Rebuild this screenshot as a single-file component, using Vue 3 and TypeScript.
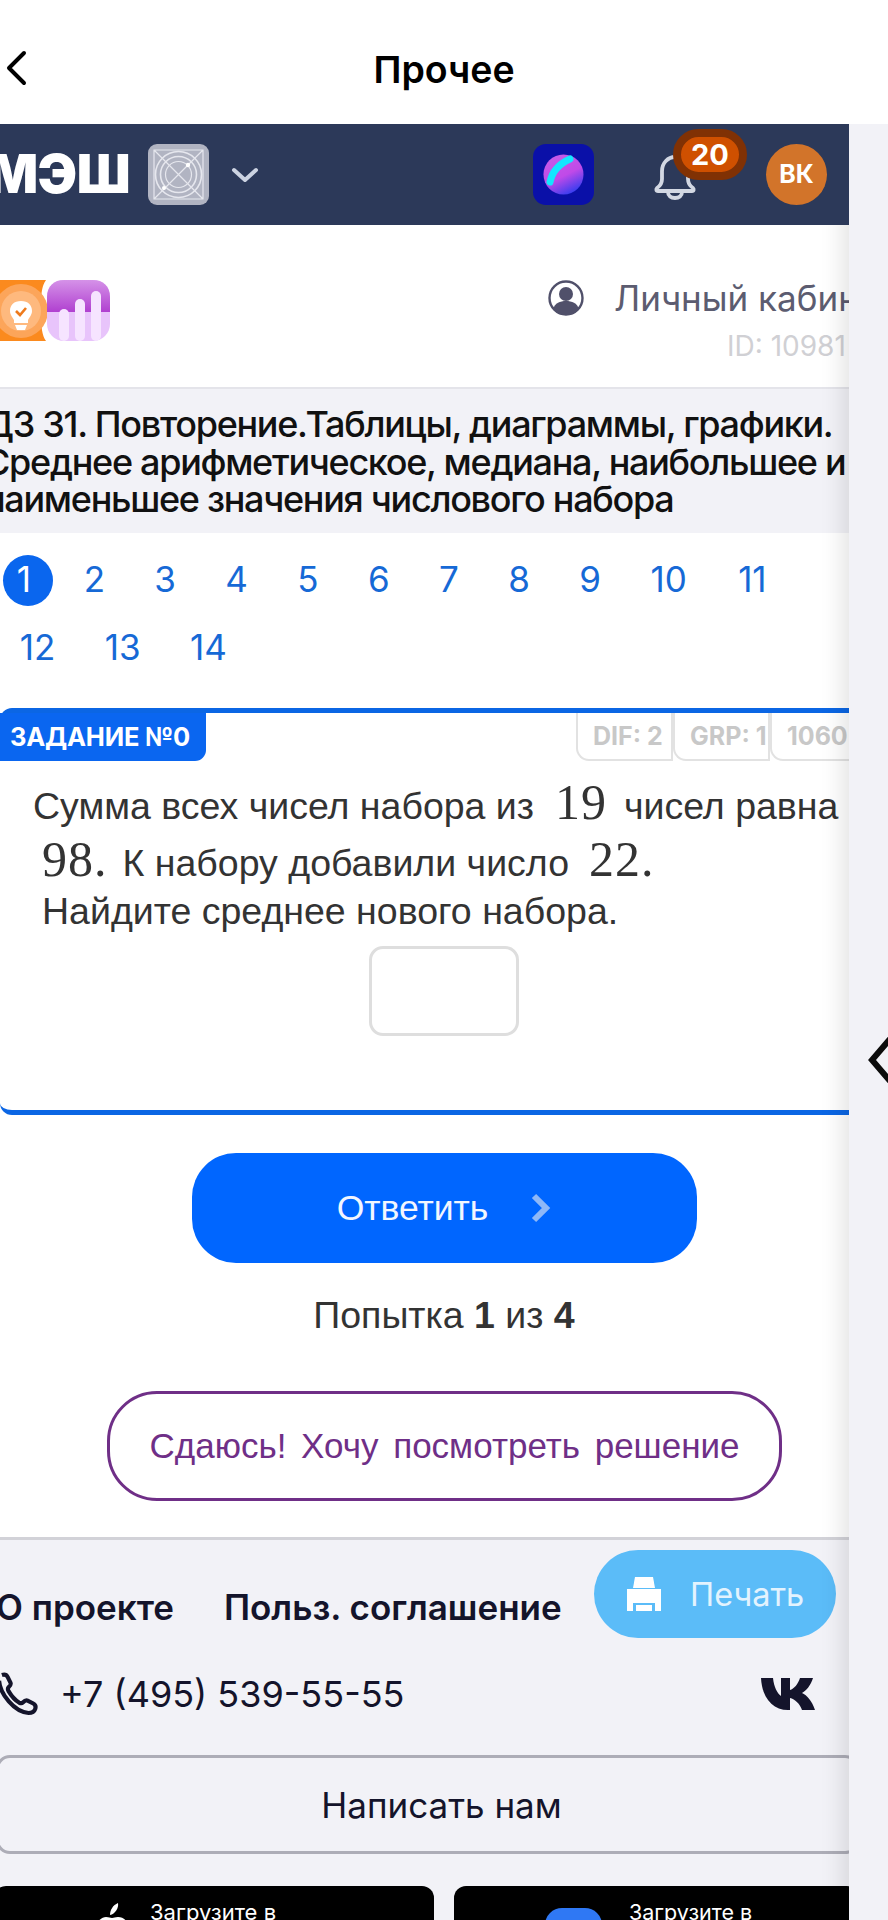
<script setup lang="ts">
const pages = Array.from({ length: 14 }, (_, i) => i + 1)
const activePage = 1
const tags = ["DIF: 2", "GRP: 1", "1060"]
</script>

<template>
  <div class="screen">
    <div class="main">
      <div class="topbar">
        <svg class="back" viewBox="0 0 24 36" fill="none">
          <path d="M20 3 5 18l15 15" stroke="#000" stroke-width="4" stroke-linecap="round" stroke-linejoin="round" />
        </svg>
        <span class="topbar-title">Прочее</span>
      </div>

      <div class="page">
        <header class="nav">
          <span class="nav-logo">МЭШ</span>
          <svg class="nav-app" viewBox="0 0 61 61">
            <rect width="61" height="61" rx="9" fill="#b1b4c2" />
            <g fill="none" stroke="#e6e7ee" stroke-width="1.2">
              <path d="M6 6h49v49H6zM6 6l49 49M55 6 6 55" />
              <circle cx="30.5" cy="30.5" r="23" stroke-width="1.6" />
              <circle cx="30.5" cy="30.5" r="18" stroke-width="1.6" />
              <circle cx="30.5" cy="30.5" r="13" />
            </g>
            <circle cx="40" cy="21" r="2.2" fill="#fff" />
            <circle cx="16" cy="44" r="2" fill="#fff" />
          </svg>
          <svg class="nav-caret" viewBox="0 0 28 16" fill="none">
            <path d="M3 3l11 10L25 3" stroke="#ccd3e2" stroke-width="4" stroke-linecap="round" stroke-linejoin="round" />
          </svg>
          <svg class="nav-sphere" viewBox="0 0 61 61">
            <defs>
              <linearGradient id="sph" x1="0.2" y1="0" x2="0.7" y2="1">
                <stop offset="0" stop-color="#c65ce8" />
                <stop offset="0.55" stop-color="#c04ae8" />
                <stop offset="1" stop-color="#2f3cf0" />
              </linearGradient>
            </defs>
            <rect width="61" height="61" rx="13" fill="#0a10a8" />
            <circle cx="30.5" cy="30.5" r="20" fill="url(#sph)" />
            <path d="M17 38C19 28 26 20 37 15" fill="none" stroke="#13e6ff" stroke-width="7" stroke-linecap="round" />
          </svg>
          <span class="nav-bell">
            <svg viewBox="0 0 44 48" fill="none">
              <path d="M4 36c3-2 5-4 5-9v-8C9 11 15 5 22 5s13 6 13 14v8c0 5 2 7 5 9 1 1 1 3-1 3H5c-2 0-2-2-1-3Z" stroke="#d3d8e3" stroke-width="3.8" stroke-linejoin="round" />
              <path d="M15 40c0 4 3 6 7 6s7-2 7-6" stroke="#d3d8e3" stroke-width="3.8" />
            </svg>
            <span class="nav-badge">20</span>
          </span>
          <span class="nav-avatar">ВК</span>
        </header>

        <section class="user">
          <svg class="user-apps" viewBox="0 0 125 61">
            <defs>
              <linearGradient id="vio" x1="0" y1="0" x2="0" y2="1">
                <stop offset="0" stop-color="#d592e8" />
                <stop offset="1" stop-color="#b040d0" />
              </linearGradient>
            </defs>
            <path d="M0 0h61c-4 6-5 12-5 30s1 25 5 31H0Z" fill="#fb8a1e" />
            <circle cx="36" cy="31" r="27" fill="#fca55a" />
            <circle cx="36" cy="31" r="20" fill="#feb97e" />
            <path d="M36 21c7 0 11 4 11 10 0 4-3 7-4 9v3H29v-3c-1-2-4-5-4-9 0-6 4-10 11-10Z" fill="#fff" />
            <path d="M30 45h12l-2 5h-8Z" fill="#fff" />
            <path d="M31 31l4 4 6-7" fill="none" stroke="#ee7a1c" stroke-width="2.6" />
            <rect x="62" y="0" width="63" height="61" rx="17" fill="#e8c4fb" />
            <path d="M62 32V17C62 6 69 0 79 0h29c10 0 17 6 17 17v15Z" fill="url(#vio)" />
            <rect x="74" y="29" width="10" height="32" rx="5" fill="#f6e4ff" />
            <rect x="90" y="19" width="10" height="42" rx="5" fill="#f6e4ff" />
            <rect x="106" y="11" width="10" height="50" rx="5" fill="#f6e4ff" />
          </svg>
          <div class="user-info">
            <div class="user-name">
              <svg viewBox="0 0 36 36" class="user-icon">
                <circle cx="18" cy="18" r="16.5" fill="none" stroke="#50506a" stroke-width="2.4" />
                <circle cx="18" cy="14" r="7" fill="#50506a" />
                <path d="M5 29c2-6 7-8 13-8s11 2 13 8c-3 4-8 6-13 6S8 33 5 29Z" fill="#50506a" />
              </svg>
              <span>Личный кабинет</span>
            </div>
            <div class="user-id">ID: 10981</div>
          </div>
        </section>

        <h1 class="title">
          ДЗ 31. Повторение.Таблицы, диаграммы, графики.<br />
          Среднее арифметическое, медиана, наибольшее и<br />
          наименьшее значения числового набора
        </h1>

        <nav class="pager">
          <a
            v-for="n in pages"
            :key="n"
            class="pager-item"
            :class="{ 'pager-item--active': n === activePage }"
          ><span>{{ n }}</span></a>
        </nav>

        <section class="task">
          <div class="task-head">
            <span class="task-label">ЗАДАНИЕ №0</span>
            <div class="task-tags">
              <span v-for="t in tags" :key="t" class="task-tag">{{ t }}</span>
            </div>
          </div>
          <div class="task-text">
            <p class="line line--first">Сумма всех чисел набора из<span class="math math--a">19</span>чисел равна</p>
            <p class="line line--second"><span class="math math--b">98.</span>К набору добавили число<span class="math math--c">22.</span></p>
            <p class="line line--third">Найдите среднее нового набора.</p>
          </div>
          <div class="task-input"></div>
        </section>

        <button class="submit">
          <span>Ответить</span>
          <svg viewBox="0 0 22 30" fill="none">
            <path d="M4 3l12 12L4 27" stroke="#8fb8f7" stroke-width="6" />
          </svg>
        </button>

        <p class="attempt">Попытка <b>1</b> из <b>4</b></p>

        <button class="give-up">Сдаюсь! Хочу посмотреть решение</button>

        <footer class="footer">
          <div class="footer-links">
            <span>О проекте</span>
            <span>Польз. соглашение</span>
          </div>
          <div class="footer-contact">
            <svg class="phone" viewBox="0 0 40 44" fill="none">
              <path d="M2 2c3-1 5 0 6 2l3 6c1 2 0 3-2 5-1 1-1 2 0 4 3 5 6 9 11 12 2 1 3 1 4 0 2-2 3-3 5-2l6 3c2 1 3 3 2 6-1 3-4 4-7 4C15 41 0 22-1 8" stroke="#14142b" stroke-width="4.4" stroke-linejoin="round" />
            </svg>
            <span class="phone-number">+7 (495) 539-55-55</span>
            <svg class="vk" viewBox="0 0 54 32">
              <path d="M0 0h12c1 9 4 15 8 18V0h9v12c4-1 8-6 10-12h13c-2 7-7 13-11 15 5 2 10 8 13 17H41c-2-6-7-11-12-12v12h-2C12 32 1 20 0 0Z" fill="#14142b" />
            </svg>
          </div>
          <div class="footer-write">Написать нам</div>
          <div class="stores">
            <div class="store store--apple">
              <svg class="store-apple" viewBox="0 0 34 40">
                <path d="M24 0c1 5-3 11-8 12 0-5 3-10 8-12Z" fill="#fff" />
                <path d="M2 26c0-8 6-12 10-12 3 0 4 1 6 1s3-1 6-1c4 0 7 2 9 5-5 3-5 10 1 13-2 4-5 8-8 8-2 0-3-1-6-1s-4 1-6 1c-5 0-12-8-12-14Z" fill="#fff" />
              </svg>
              <span class="store-text">Загрузите в</span>
            </div>
            <div class="store store--google">
              <span class="store-play"></span>
              <span class="store-text">Загрузите в</span>
            </div>
          </div>
          <button class="print">
            <svg viewBox="0 0 34 34">
              <path d="M8 0h18l2 11H6Z" fill="#fff" />
              <path d="M0 12h34v22h-6v-8H6v8H0Z" fill="#fff" />
              <path d="M9 28h16v6H9Z" fill="#fff" />
            </svg>
            <span>Печать</span>
          </button>
        </footer>
      </div>
    </div>

    <aside class="rail">
      <svg class="rail-arrow" viewBox="0 0 20 48" fill="none">
        <path d="M22 3 4 24l18 21" stroke="#0c0c0c" stroke-width="6" />
      </svg>
    </aside>
  </div>
</template>

<style>
html,
body {
  margin: 0;
  background: #fff;
}
</style>

<style scoped>
.screen {
  position: relative;
  width: 888px;
  height: 1920px;
  overflow: hidden;
  background: #fff;
  font-family: Inter, "Noto Sans", sans-serif;
}

.main {
  position: absolute;
  inset: 0;
  overflow: hidden;
}

.topbar {
  position: relative;
  height: 124px;
  display: flex;
  align-items: center;
  justify-content: center;
}

.back {
  position: absolute;
  left: 4px;
  top: 50px;
  width: 24px;
  height: 36px;
}

.topbar-title {
  margin-top: 14px;
  font-size: 37.5px;
  font-weight: 600;
  color: #000;
}

.page {
  width: 849px;
  height: 1796px;
  overflow: hidden;
  position: relative;
}

/* header */
.nav {
  position: relative;
  z-index: 3;
  height: 101px;
  background: #2c3959;
  display: flex;
  align-items: center;
}

.nav-logo {
  margin-left: -40px;
  width: 170px;
  flex: none;
  text-align: right;
  font-size: 53px;
  font-weight: 900;
  color: #fff;
  letter-spacing: -0.5px;
  line-height: 1;
}

.nav-app {
  margin-left: 18px;
  width: 61px;
  height: 61px;
  flex: none;
}

.nav-caret {
  margin-left: 22px;
  width: 28px;
  height: 16px;
  flex: none;
  margin-top: 1px;
}

.nav-sphere {
  margin-left: 274px;
  width: 61px;
  height: 61px;
  flex: none;
}

.nav-bell {
  position: relative;
  margin-left: 59px;
  width: 44px;
  height: 48px;
  flex: none;
  margin-top: 3px;
}

.nav-bell svg {
  width: 44px;
  height: 48px;
  display: block;
}

.nav-badge {
  position: absolute;
  left: 20px;
  top: -23px;
  width: 58px;
  height: 35px;
  border: 8px solid #803104;
  border-radius: 26px;
  background: #cf5000;
  color: #fff;
  font-size: 29px;
  font-weight: 700;
  line-height: 35px;
  text-align: center;
}

.nav-avatar {
  margin-left: 69px;
  width: 61px;
  height: 61px;
  flex: none;
  border-radius: 50%;
  background: #d2742a;
  color: #fff;
  font-size: 25px;
  font-weight: 700;
  line-height: 61px;
  text-align: center;
}

/* user row */
.user {
  height: 162px;
  border-bottom: 2px solid #e4e4ea;
  display: flex;
  align-items: flex-start;
  white-space: nowrap;
}

.user-apps {
  margin: 55px 0 0 -15px;
  width: 125px;
  height: 61px;
  flex: none;
}

.user-info {
  margin-left: 438px;
  padding-top: 55px;
  flex: none;
}

.user-name {
  display: flex;
  align-items: center;
  gap: 30px;
  height: 36px;
  font-size: 35px;
  color: #5c5c70;
}

.user-icon {
  width: 36px;
  height: 36px;
  flex: none;
}

.user-id {
  margin: 14px 0 0 179px;
  font-size: 28px;
  line-height: 32px;
  color: #d0d0d4;
}

/* title */
.title {
  margin: 0 0 0 -16px;
  width: 865px;
  height: 144px;
  box-sizing: border-box;
  padding-top: 17px;
  background: #f2f2f7;
  font-size: 36px;
  font-weight: 500;
  line-height: 37.5px;
  letter-spacing: -1.3px;
  color: #111;
  white-space: nowrap;
}

/* pagination */
.pager {
  height: 175px;
  box-sizing: border-box;
  margin-left: -8px;
  padding-top: 22px;
  width: 857px;
  display: flex;
  flex-wrap: wrap;
  align-content: flex-start;
  row-gap: 17px;
}

.pager-item {
  height: 51px;
  box-sizing: border-box;
  padding: 0 24.7px 3px;
  display: flex;
  align-items: center;
  justify-content: center;
  position: relative;
  font-size: 35px;
  font-weight: 400;
  color: #1669d6;
}

.pager-item span {
  position: relative;
}

.pager-item:nth-child(11) {
  margin-left: 2px;
}

.pager-item:nth-child(12) {
  margin-left: 3px;
}

.pager-item--active {
  color: #fff;
  padding-right: 28px;
}

.pager-item--active::before {
  content: "";
  position: absolute;
  left: 10.5px;
  top: 0;
  width: 50px;
  height: 51px;
  border-radius: 50%;
  background: #0a66ee;
}

/* task card */
.task {
  height: 407px;
  box-sizing: border-box;
  margin-right: -20px;
  border-top: 5px solid #0b66e4;
  border-bottom: 5px solid #0b66e4;
  border-radius: 12px 0 0 12px;
  display: flex;
  flex-direction: column;
}

.task-head {
  height: 48px;
  flex: none;
  display: flex;
  justify-content: space-between;
}

.task-label {
  width: 206px;
  box-sizing: border-box;
  padding-left: 10px;
  background: #0a66f0;
  border-radius: 0 0 11px 0;
  color: #fff;
  font-size: 25.5px;
  font-weight: 700;
  letter-spacing: -0.2px;
  line-height: 48px;
  white-space: nowrap;
}

.task-tags {
  display: flex;
  width: 293px;
  flex: none;
}

.task-tag {
  width: 97px;
  box-sizing: border-box;
  border: 2px solid #e2e2e2;
  border-top: 0;
  border-radius: 0 0 0 13px;
  color: #c8c8c8;
  font-size: 25px;
  font-weight: 700;
  line-height: 46px;
  padding-left: 15px;
  white-space: nowrap;
  overflow: hidden;
}

.task-text {
  flex: none;
  color: #333;
  font-family: "Liberation Sans", sans-serif;
  font-size: 37.5px;
  white-space: nowrap;
}

.line {
  margin: 0;
}

.line--first {
  padding: 13px 0 0 33px;
  height: 56px;
  line-height: 56px;
}

.line--second {
  padding-left: 42px;
  height: 60px;
  line-height: 58px;
}

.line--third {
  padding-left: 42px;
  height: 43px;
  line-height: 43px;
}

.math {
  font-family: "Liberation Serif", serif;
  font-size: 50px;
  letter-spacing: 1px;
  color: #333;
}

.math--a {
  margin: 0 17px 0 21px;
}

.math--b {
  margin-right: 15px;
}

.math--c {
  margin-left: 20px;
}

.task-input {
  margin: 13px 0 0 369px;
  width: 150px;
  height: 90px;
  box-sizing: border-box;
  border: 3px solid #dedede;
  border-radius: 14px;
}

/* buttons */
.submit {
  display: flex;
  align-items: center;
  justify-content: center;
  gap: 42px;
  margin: 38px 0 0 192px;
  width: 505px;
  height: 110px;
  padding: 0;
  border: 0;
  border-radius: 44px;
  background: #0066ff;
  color: #f2f6ff;
  font-family: "Liberation Sans", sans-serif;
  font-size: 35.5px;
}

.submit svg {
  width: 22px;
  height: 30px;
}

.attempt {
  margin: 32px 0 0;
  padding-left: 39px;
  height: 40px;
  text-align: center;
  font-family: "Liberation Sans", sans-serif;
  font-size: 37.5px;
  line-height: 40px;
  color: #333;
}

.give-up {
  display: block;
  margin: 56px 0 0 107px;
  width: 675px;
  height: 110px;
  padding: 0;
  border: 3px solid #6f2f87;
  border-radius: 50px;
  background: #fff;
  color: #6f2f87;
  font-family: "Liberation Sans", sans-serif;
  font-size: 35px;
  word-spacing: 5px;
}

/* footer */
.footer {
  position: relative;
  margin-top: 36px;
  height: 400px;
  border-top: 3px solid #d2d2d8;
  background: #f2f2f7;
}

.footer-links {
  display: flex;
  gap: 50px;
  margin-left: -4px;
  padding-top: 47px;
  font-size: 35px;
  font-weight: 600;
  line-height: 40px;
  color: #14142b;
}

.footer-contact {
  display: flex;
  align-items: center;
  margin-top: 45px;
  height: 44px;
}

.phone {
  width: 38px;
  height: 42px;
  flex: none;
  overflow: visible;
}

.phone-number {
  margin-left: 22px;
  font-size: 36px;
  color: #14142b;
  white-space: nowrap;
}

.vk {
  margin-left: auto;
  margin-right: 34px;
  width: 54px;
  height: 32px;
}

.footer-write {
  margin: 39px -10px 0 -4px;
  height: 99px;
  box-sizing: border-box;
  border: 3px solid #adadb7;
  border-radius: 14px;
  padding-left: 28px;
  text-align: center;
  font-size: 35px;
  line-height: 94px;
  color: #14142b;
}

.stores {
  display: flex;
  gap: 20px;
  margin: 32px -10px 0 -6px;
}

.store {
  position: relative;
  flex: none;
  height: 70px;
  background: #000;
  border-radius: 12px 12px 0 0;
}

.store--apple {
  width: 440px;
}

.store--google {
  flex: 1;
}

.store-text {
  position: absolute;
  top: 13px;
  color: #fff;
  font-size: 22px;
  line-height: 26px;
  white-space: nowrap;
}

.store--apple .store-text {
  left: 156px;
}

.store--google .store-text {
  left: 175px;
  font-size: 21.5px;
}

.store-apple {
  position: absolute;
  left: 100px;
  top: 17px;
  width: 34px;
  height: 40px;
}

.store-play {
  position: absolute;
  left: 91px;
  top: 22px;
  width: 57px;
  height: 57px;
  border-radius: 17px;
  background: #2f78f4;
}

.print {
  position: absolute;
  left: 594px;
  top: 10px;
  width: 242px;
  height: 88px;
  display: flex;
  align-items: center;
  gap: 29px;
  padding: 0 0 0 33px;
  border: 0;
  border-radius: 44px;
  background: #5bbcf8;
  color: #e3f3fe;
  font-family: Inter, sans-serif;
  font-size: 32.5px;
}

.print svg {
  width: 34px;
  height: 34px;
  flex: none;
}

/* right rail */
.rail {
  position: absolute;
  z-index: 2;
  left: 849px;
  right: 0;
  top: 124px;
  bottom: 0;
  background: #f2f2f7;
  box-shadow: -4px 0 26px rgba(0, 0, 0, 0.13);
  clip-path: inset(0 0 0 -40px);
}

.rail-arrow {
  display: block;
  margin: 912px 0 0 19px;
  width: 20px;
  height: 48px;
}
</style>
